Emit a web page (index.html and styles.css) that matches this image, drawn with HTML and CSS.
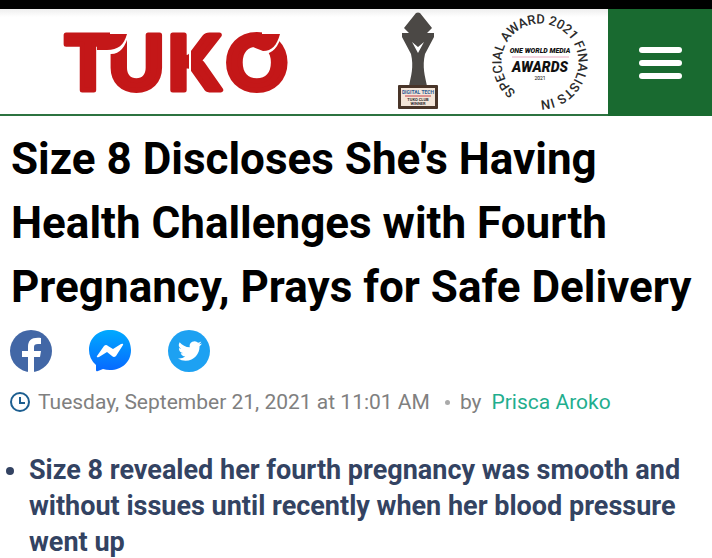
FILE: index.html
```
<!DOCTYPE html>
<html lang="en">
<head>
    <meta charset="UTF-8">
    <meta name="viewport" content="width=device-width, initial-scale=1.0">
    <title>Size 8 Discloses She's Having Health Challenges with Fourth Pregnancy</title>
    <link rel="stylesheet" href="styles.css">
</head>
<body>
    <header class="header">
        <a class="logo" href="#" aria-label="Tuko">
            <svg width="236" height="100" viewBox="0 0 236 100">
                <g class="logo-text">
                    <text x="8" y="78">T</text>
                    <text x="51" y="78">U</text>
                    <text x="110" y="78">K</text>
                    <text x="169" y="78">O</text>
                </g>
                <!-- leaf tips over the letters -->
                <path class="logo-cut" d="M54 21 H71 C68 34 62 41 54 41Z"/>
                <path class="logo-leaf" d="M40 22 H70 C67 33 61 38 50 38 H40Z"/>
                <path class="logo-cut" d="M206 21 H224 C221 34 216 41 206 41Z"/>
                <path class="logo-leaf" d="M196 22 H223 C220 33 215 39 206 39 L196 35Z"/>
                <path class="logo-line" d="M133 18 V82"/>
            </svg>
        </a>

        <div class="awards">
            <svg width="44" height="100" viewBox="0 0 44 100">
                <path fill="#4b4845" d="M20 1 Q22 0 24 1 L36 16 L31 21 L38 21 L38 25 L29 42 C26 55 29 64 31 74 L13 74 C15 64 18 55 15 42 L6 25 L6 21 L13 21 L8 16Z"/>
                <path fill="#fff" d="M16 30 L22 35 L28 30 L22 41Z"/>
                <rect x="2" y="73" width="40" height="24" rx="1" fill="#493529"/>
                <rect x="5" y="76" width="34" height="18" fill="#f4e6d9"/>
                <text class="plate-title" x="22" y="82">DIGITAL TECH</text>
                <path d="M9 84 H35" stroke="#c44149"/>
                <text class="plate-text" x="22" y="89">TUKO CLUB</text>
                <text class="plate-text" x="22" y="93">WINNER</text>
            </svg>
            <svg width="100" height="100" viewBox="0 0 100 100">
                <path id="ring" fill="none" d="M26 80 A38 38 0 0 1 74 20 A38 38 0 0 1 26 80"/>
                <text class="ring-text"><textPath href="#ring">SPECIAL AWARD 2021 FINALISTS IN</textPath></text>
                <text class="award-small" x="50" y="41">ONE WORLD MEDIA</text>
                <path d="M22 45 H79" stroke="#e7a9c0"/>
                <text class="award-big" x="50" y="60">AWARDS</text>
                <text class="award-year" x="50" y="68">2021</text>
            </svg>
        </div>

        <button class="menu-button" aria-label="Menu">
            <span></span>
            <span></span>
            <span></span>
        </button>
    </header>

    <main>
        <h1>Size 8 Discloses She's Having Health Challenges with Fourth Pregnancy, Prays for Safe Delivery</h1>

        <div class="share">
            <a href="#" aria-label="Facebook">
                <svg width="42" height="42" viewBox="0 0 42 42">
                    <circle cx="21" cy="21" r="21" fill="#4267a6"/>
                    <path fill="#fff" d="M18 42 V27 H12 V21 H18 V17 C18 10 22 7 31 8 V14 H28 C25 14 24 15 24 17 V21 H31 L30 27 H24 V42Z"/>
                </svg>
            </a>
            <a href="#" aria-label="Messenger">
                <svg width="42" height="42" viewBox="0 0 42 42">
                    <defs>
                        <linearGradient id="blue" x1="0" y1="0" x2="0" y2="1">
                            <stop offset="0" stop-color="#00aaff"/>
                            <stop offset="1" stop-color="#0768ff"/>
                        </linearGradient>
                    </defs>
                    <path fill="url(#blue)" d="M21 0 C33 0 42 8 42 20 S33 40 21 40 Q17 40 14 39 L9 41 Q7 42 7 40 V35 Q0 29 0 20 C0 8 9 0 21 0Z"/>
                    <path fill="#fff" d="M8 26 L15 16 Q17 14 19 16 L24 19 L32 14 Q35 13 34 15 L27 26 Q25 28 23 26 L18 22 L10 27 Q7 28 8 26Z"/>
                </svg>
            </a>
            <a href="#" aria-label="Twitter">
                <svg width="42" height="42" viewBox="0 0 42 42">
                    <circle cx="21" cy="21" r="21" fill="#1da1f2"/>
                    <path fill="#fff" transform="translate(10 9)" d="M23.95 4.57a10 10 0 0 1-2.82.77 4.96 4.96 0 0 0 2.16-2.72c-.95.55-2 .95-3.13 1.18a4.92 4.92 0 0 0-8.38 4.48C7.69 8.1 4.07 6.13 1.64 3.16a4.92 4.92 0 0 0 1.52 6.57 4.9 4.9 0 0 1-2.23-.61v.06a4.92 4.92 0 0 0 3.95 4.83 5 5 0 0 1-2.21.08 4.94 4.94 0 0 0 4.6 3.42A9.87 9.87 0 0 1 0 19.54a14 14 0 0 0 7.55 2.21c9.05 0 14-7.5 14-13.98 0-.21 0-.42-.02-.63a9.94 9.94 0 0 0 2.46-2.55z"/>
                </svg>
            </a>
        </div>

        <div class="info">
            <svg width="20" height="20" viewBox="0 0 20 20" fill="none" stroke="#1c5e90" stroke-width="2">
                <circle cx="10" cy="10" r="9"/>
                <path d="M10 5 V11 H15"/>
            </svg>
            <time datetime="2021-09-21T11:01">Tuesday, September 21, 2021 at 11:01 AM</time>
            <span class="dot"></span>
            <span class="by">by</span>
            <a class="author" href="#">Prisca Aroko</a>
        </div>

        <ul>
            <li>Size 8 revealed her fourth pregnancy was smooth and without issues until recently when her blood pressure went up</li>
        </ul>
    </main>
</body>
</html>
```
FILE: styles.css
```
body {
    font-family: Roboto, Arial, sans-serif;
    background-color: #fff;
    margin: 0;
    border-top: 9px solid #000;
}

.header {
    display: flex;
    align-items: stretch;
    height: 105px;
    border-bottom: 2px solid #2c7340;
    background: linear-gradient(#eee, #fff 8px);
}

.logo {
    display: flex;
    align-items: center;
    margin-left: 57px;
}

.logo-text {
    font-family: Lato, sans-serif;
    font-weight: 900;
    font-size: 76px;
    fill: #c41718;
    stroke: #c41718;
    stroke-width: 5px;
    stroke-linejoin: round;
}

.logo-leaf {
    fill: #c41718;
}

.logo-cut {
    fill: #fff;
    stroke: #fff;
    stroke-width: 2px;
}

.logo-line {
    stroke: #fff;
    stroke-width: 2px;
}

.awards {
    display: flex;
    align-items: center;
    gap: 50px;
    margin-left: auto;
    margin-right: 18px;
}

.plate-title {
    font-size: 5px;
    font-weight: 700;
    fill: #305b94;
    text-anchor: middle;
}

.plate-text {
    font-size: 4px;
    font-weight: 700;
    fill: #333;
    text-anchor: middle;
}

.ring-text {
    font-size: 13px;
    font-weight: 500;
    fill: #2b2b2b;
}

.award-small, .award-big {
    font-style: italic;
    font-weight: 900;
    fill: #111;
    text-anchor: middle;
}

.award-small {
    font-size: 7px;
}

.award-big {
    font-size: 14px;
}

.award-year {
    font-size: 5px;
    text-anchor: middle;
}

.menu-button {
    display: flex;
    flex-direction: column;
    align-items: center;
    justify-content: center;
    gap: 7px;
    width: 104px;
    margin-bottom: -2px;
    padding: 0;
    border: none;
    background-color: #196a30;
    cursor: pointer;
}

.menu-button span {
    width: 43px;
    height: 6px;
    border-radius: 3px;
    background-color: #fff;
}

h1 {
    margin: 11px 11px 0;
    font-size: 44px;
    font-weight: 700;
    line-height: 64px;
    color: #000;
}

.share {
    display: flex;
    gap: 37px;
    margin: 11px 10px 0;
}

.share svg {
    display: block;
}

.info {
    display: flex;
    align-items: center;
    margin: 15px 10px 0;
    font-size: 21px;
    line-height: 30px;
    color: #808080;
}

.info time {
    margin-left: 8px;
}

.dot {
    width: 5px;
    height: 5px;
    margin: 0 10px 0 15px;
    border-radius: 50%;
    background-color: #aaa;
}

.author {
    margin-left: 10px;
    color: #1fae8e;
    text-decoration: none;
}

ul {
    margin: 35px 11px 0;
    padding-left: 18px;
}

li {
    font-size: 27px;
    font-weight: 700;
    line-height: 36px;
    color: #334362;
}
```
